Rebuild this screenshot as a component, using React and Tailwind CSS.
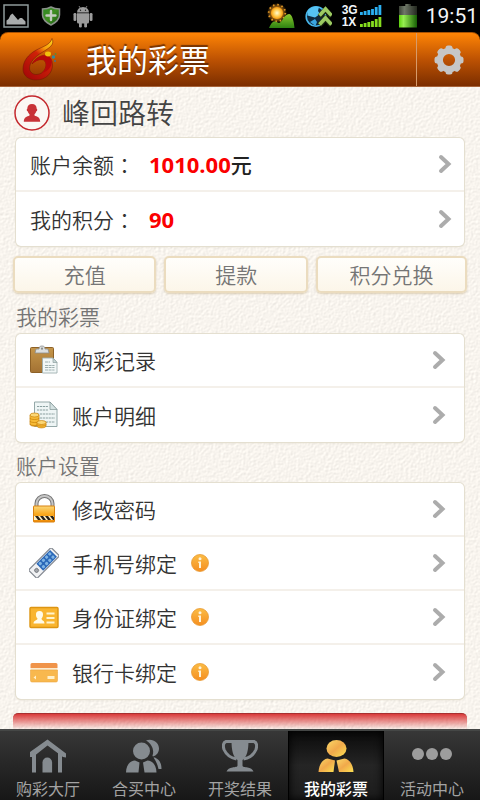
const FONT = "font-['Noto_Sans_CJK_SC',sans-serif] font-[350]";

function PictureIcon() {
  return (
    <svg width="26" height="24" viewBox="0 0 26 24">
      <rect x="1" y="1" width="24" height="22" fill="#000" stroke="#8f9a9b" strokeWidth="1.500" />
      <path d="M3.500 20.500v-4l2-1.500 2-4 2-1.500 3 3.500 2.500 3 2-2 2 0 3.500 3.500v3z" fill="#a9acac" />
    </svg>
  );
}

function ShieldIcon() {
  return (
    <svg width="20" height="20" viewBox="0 0 20 20">
      <defs>
        <linearGradient id="shield" x1="0" y1="0" x2="1" y2="1">
          <stop offset="0" stopColor="#2f8a26" />
          <stop offset="0.5" stopColor="#3f8d20" />
          <stop offset="1" stopColor="#14560d" />
        </linearGradient>
      </defs>
      <path d="M1.500 3q5 0 8.500-2 3.500 2 8.500 2v6c0 5-4 7.500-8.500 10C5.500 16.500 1.500 14 1.500 9z" fill="url(#shield)" stroke="#8b918b" strokeWidth="1.500" />
      <path d="M10 5v9M5.500 9.500h9" stroke="#c3ccbf" strokeWidth="2.400" strokeLinecap="round" />
    </svg>
  );
}

function AndroidIcon() {
  return (
    <svg width="20" height="23" viewBox="0 0 20 23" fill="#9c9c9c">
      <path d="M4 7.500a6 5.500 0 0 1 12 0z" />
      <path d="M6 1l1.500 2.500M14 1l-1.500 2.500" stroke="#9c9c9c" strokeWidth="0.800" />
      <path d="M4 8.300h12V17a1.500 1.500 0 0 1-1.500 1.500h-9A1.500 1.500 0 0 1 4 17z" />
      <rect x="0.500" y="8" width="2.900" height="8" rx="1.300" />
      <rect x="16.600" y="8" width="2.900" height="8" rx="1.300" />
      <rect x="6" y="16" width="2.800" height="6.500" rx="1.300" />
      <rect x="11.200" y="16" width="2.800" height="6.500" rx="1.300" />
      <circle cx="7.500" cy="5.200" r="0.700" fill="#222" />
      <circle cx="12.500" cy="5.200" r="0.700" fill="#222" />
    </svg>
  );
}

function WeatherIcon() {
  return (
    <svg width="28" height="26" viewBox="0 0 28 26">
      <defs>
        <radialGradient id="sun">
          <stop offset="0" stopColor="#fffbd0" />
          <stop offset="0.600" stopColor="#ffc94a" />
          <stop offset="1" stopColor="#f39a12" />
        </radialGradient>
        <radialGradient id="glow">
          <stop offset="0.400" stopColor="#e8921a" />
          <stop offset="1" stopColor="#e8921a" stopOpacity="0" />
        </radialGradient>
        <linearGradient id="hill" x1="0" y1="0" x2="0" y2="1">
          <stop offset="0" stopColor="#8cc92d" />
          <stop offset="1" stopColor="#2e8212" />
        </linearGradient>
      </defs>
      <circle cx="10" cy="10" r="10" fill="url(#glow)" />
      <circle cx="10" cy="10" r="8.300" fill="none" stroke="#e59a28" strokeWidth="1.800" strokeDasharray="1.500 2.850" />
      <circle cx="10" cy="10" r="6" fill="url(#sun)" />
      <path d="M2 25c2-4 3-6.500 6-6.500 2 0 2.500 1.500 4 1.500C15 20 17 11 22 11c3 0 5 7 5.500 14z" fill="url(#hill)" />
    </svg>
  );
}

function GlobeIcon() {
  return (
    <svg width="27" height="23" viewBox="0 0 27 23">
      <circle cx="11" cy="11.500" r="9.800" fill="#10283c" stroke="#47b7ec" strokeWidth="1.600" />
      <path d="M3 5.500Q8 0 14 2l-1 4 2 3-5 3.500-4-1-3.500-1z" fill="#56c3f3" />
      <path d="M5 17l5-3 2 3-1.500 4z" fill="#3aa5e0" />
      <path d="M14.500 11.500L20.500 5l6 6.500M14.500 20l6-6.500 6 6.500" fill="none" stroke="#1c2b10" strokeWidth="5" />
      <path d="M14.500 10.500L20.500 4l6 6.500M14.500 19.500l6-6.500 6 6.500" fill="none" stroke="#9ccb62" strokeWidth="3.600" />
    </svg>
  );
}

function SignalIcon() {
  const bars = [3, 4, 5, 6, 8, 10];
  return (
    <svg width="22" height="22" viewBox="0 0 22 22">
      {bars.map((h, i) => (
        <g key={i}>
          <rect x={i * 3.700} y={10 - h} width="2.800" height={h} fill="#2bb0f2" />
          <rect x={i * 3.700} y={22 - h} width="2.800" height={h} fill="#86dc1f" />
        </g>
      ))}
    </svg>
  );
}

function BatteryIcon() {
  return (
    <svg width="20" height="24" viewBox="0 0 20 24">
      <defs>
        <linearGradient id="batt" x1="0" y1="0" x2="1" y2="0">
          <stop offset="0" stopColor="#5fd00e" />
          <stop offset="0.250" stopColor="#95ee50" />
          <stop offset="1" stopColor="#175f05" />
        </linearGradient>
        <linearGradient id="battTop" x1="0" y1="0" x2="1" y2="0">
          <stop offset="0" stopColor="#3c4236" />
          <stop offset="0.300" stopColor="#6f7868" />
          <stop offset="1" stopColor="#23281f" />
        </linearGradient>
      </defs>
      <rect x="7" y="0" width="6" height="3" fill="url(#battTop)" />
      <rect x="1" y="2" width="18" height="10" fill="url(#battTop)" />
      <rect x="1" y="11" width="18" height="12.500" fill="url(#batt)" />
    </svg>
  );
}

function StatusBar() {
  return (
    <div className="flex h-8 items-center justify-between bg-black pr-0.5 pl-[3px]">
      <div className="flex items-center gap-3">
        <PictureIcon />
        <ShieldIcon />
        <AndroidIcon />
      </div>
      <div className="flex items-center">
        <WeatherIcon />
        <span className="ml-2.5"><GlobeIcon /></span>
        <div className="ml-2.5 flex flex-col font-['Liberation_Sans',sans-serif] text-[12px] leading-3 font-bold text-slate-100">
          <span>3G</span>
          <span>1X</span>
        </div>
        <span className="ml-0.5"><SignalIcon /></span>
        <span className="ml-4"><BatteryIcon /></span>
        <span className="ml-2 font-[Roboto,sans-serif] text-[21px] leading-none font-normal text-gray-100">19:51</span>
      </div>
    </div>
  );
}

function Logo() {
  return (
    <svg width="36" height="44" viewBox="0 0 36 44">
      <defs>
        <linearGradient id="flame" x1="0.900" y1="0" x2="0.300" y2="1">
          <stop offset="0" stopColor="#ffd21c" />
          <stop offset="0.250" stopColor="#f79a0a" />
          <stop offset="0.450" stopColor="#cf2208" />
          <stop offset="1" stopColor="#a80a08" />
        </linearGradient>
      </defs>
      <path d="M30 .5C28 8 18 9 11 14 4 19 1 25 1 31c0 7 6 11 13 11 10 0 17-7 16.500-16-.3-4-2.500-7-5.500-9-6 0-12 3-15 9 4-4 8-5 11.500-4 4 2 3 10-2 13-5 3-11 1.500-12-4C7 24 14 18 20 14.500 27 10 33 7 30 .5z" fill="url(#flame)" stroke="#6d1604" strokeWidth="0.500" />
      <path d="M25 17c-6 0-12 3-15 9 4-4 8-5 11.500-4 4 2 3 10-2 13 5-1 10-5 10.500-11 0-3-2-5-5-7z" fill="#b8090a" />
      <ellipse cx="26" cy="16" rx="3" ry="2.400" fill="#f2c10c" />
      <circle cx="31.500" cy="19" r="1.700" fill="#2f8ba0" />
      <circle cx="33.500" cy="16" r="0.900" fill="#5a8a3a" />
      <circle cx="33" cy="23" r="0.900" fill="#39779b" />
    </svg>
  );
}

function GearIcon() {
  return (
    <svg width="30" height="30" viewBox="0 0 30 30">
      <g fill="#c6c6c6">
        {[0, 45, 90, 135, 180, 225, 270, 315].map((a) => (
          <rect key={a} x="11.500" y="0.500" width="7" height="7" rx="2.500" transform={`rotate(${a} 15 15)`} />
        ))}
      </g>
      <circle cx="15" cy="15" r="9.200" fill="none" stroke="#c6c6c6" strokeWidth="6.200" />
    </svg>
  );
}

function Header() {
  return (
    <div className="bg-black">
      <header className="flex h-[55px] items-stretch rounded-t-lg border-t border-b border-t-[#a85204] border-b-[#a8643a] bg-linear-to-b from-[#ff8505] via-[#bd5203] to-[#7c2e00]">
        <div className="flex flex-1 items-center pl-[22px]">
          <Logo />
          <h1 className="ml-7 pb-0.5 text-[31px] leading-none font-normal text-white [text-shadow:0_-2px_1px_rgba(70,25,0,0.7)]">我的彩票</h1>
        </div>
        <button type="button" aria-label="设置" className="flex w-16 items-center justify-center border-l border-[#d69a6a]">
          <GearIcon />
        </button>
      </header>
    </div>
  );
}

function AvatarIcon() {
  return (
    <svg width="36" height="36" viewBox="0 0 36 36">
      <circle cx="18" cy="18" r="17" fill="#fbf7f3" stroke="#c4282d" strokeWidth="1.500" />
      <path d="M18 9c3 0 4.700 2 4.700 4.700 1 .6.500 2.300-.4 2.600-.3 1.500-1.200 2.400-1.800 3v1.200c2.500 1.200 5.700 1.700 5.700 6.200H9.800c0-4.500 3.200-5 5.700-6.200v-1.200c-.6-.6-1.500-1.500-1.800-3-.9-.3-1.400-2-.4-2.600C13.300 11 15 9 18 9z" fill="#c83237" />
    </svg>
  );
}

function Chevron() {
  return (
    <svg width="14" height="20" viewBox="0 0 14 20" className="shrink-0">
      <path d="M3 3l7.500 7L3 17" fill="none" stroke="#acacac" strokeWidth="4" strokeLinecap="round" strokeLinejoin="miter" />
    </svg>
  );
}

function ClipboardIcon() {
  return (
    <svg width="30" height="30" viewBox="0 0 30 30">
      <defs>
        <linearGradient id="board" x1="0" y1="0" x2="0" y2="1">
          <stop offset="0" stopColor="#c5964a" />
          <stop offset="1" stopColor="#a37233" />
        </linearGradient>
      </defs>
      <rect x="1.500" y="2.500" width="23" height="25" rx="1" fill="url(#board)" stroke="#8d6127" />
      <path d="M7 4h3c0-2 1-3 3-3s3 1 3 3h3l1 4H6z" fill="#dcdfdf" stroke="#8a8d8d" strokeWidth="0.800" />
      <circle cx="13" cy="3.700" r="1.100" fill="#8a8d8d" />
      <path d="M13.500 13h10.500l4 4.500v10.500h-14.500z" fill="#f2f7f7" stroke="#9fb0b0" strokeWidth="0.900" />
      <path d="M24 13v4.500h4z" fill="#c9d8d8" stroke="#7f9393" strokeWidth="0.600" />
      <path d="M16 17h5M16 20.500h9.500M16 22.500h9.500M16 25h9.500" stroke="#93a6a6" strokeWidth="0.900" strokeDasharray="3 0.600" />
    </svg>
  );
}

function StatementIcon() {
  return (
    <svg width="30" height="30" viewBox="0 0 30 30">
      <path d="M5.500 2H21l7 7.500V26.500H5.500z" fill="#eef5f5" stroke="#94a8a8" />
      <path d="M21 2v7.500h7z" fill="#d5e2e2" stroke="#7f9393" strokeWidth="0.700" />
      <path d="M8 6.500h11M8 10h11M8 14h18M8 18h18M14 22h12" stroke="#8aa0a0" strokeWidth="1.100" strokeDasharray="2.200 0.700" />
      <g stroke="#c9810a" strokeWidth="0.700" fill="#f6ba35">
        <path d="M1 15v9c0 3 9 3 9 0v-9z" />
        <path d="M1 18c0 2 9 2 9 0M1 21c0 2 9 2 9 0M1 24c0 2 9 2 9 0" fill="none" />
        <ellipse cx="5.500" cy="15" rx="4.500" ry="2" fill="#fbd776" />
        <path d="M8 22v4c0 2.500 9 2.500 9 0v-4z" />
        <path d="M8 24.500c0 2 9 2 9 0" fill="none" />
        <ellipse cx="12.500" cy="22.500" rx="4.500" ry="2" fill="#fbd776" />
      </g>
    </svg>
  );
}

function LockIcon() {
  return (
    <svg width="30" height="30" viewBox="0 0 30 30">
      <defs>
        <linearGradient id="lock" x1="0" y1="0" x2="0" y2="1">
          <stop offset="0" stopColor="#fbd87a" />
          <stop offset="0.500" stopColor="#f9a91f" />
          <stop offset="1" stopColor="#f08c08" />
        </linearGradient>
      </defs>
      <path d="M7.500 13v-3.500a8 7.500 0 0 1 16 0V13" fill="none" stroke="#757575" strokeWidth="4" />
      <path d="M7.500 13v-3.500a8 7.500 0 0 1 16 0V13" fill="none" stroke="#c6c6c6" strokeWidth="2" />
      <rect x="4.500" y="12" width="21" height="16" rx="0.500" fill="url(#lock)" stroke="#d9810e" />
      <rect x="5" y="22" width="20" height="4" fill="#fff0c4" />
      <path d="M6 22h3l3 4H9zM11 22h3l3 4h-3zM16 22h3l3 4h-3zM21 22h3l1 1.500V26h-1z" fill="#252019" />
    </svg>
  );
}

function PhoneIcon() {
  return (
    <svg width="30" height="30" viewBox="0 0 30 30">
      <g transform="rotate(45 15 15)">
        <rect x="9" y="-1" width="12" height="32" rx="1.200" fill="#f1f2f4" stroke="#858a92" strokeWidth="1.200" />
        <rect x="10.200" y="1.500" width="9.600" height="19.500" fill="#2a68b8" />
        <g fill="#7fb4e4">
          {[3, 7.500, 12, 16.500].map((y) => (
            <g key={y}>
              <rect x="11.200" y={y} width="3" height="3" rx="1" />
              <rect x="15.700" y={y} width="3" height="3" rx="1" />
            </g>
          ))}
        </g>
        <circle cx="15" cy="25.500" r="2" fill="#a2a5aa" stroke="#696d73" strokeWidth="0.800" />
      </g>
    </svg>
  );
}

function IdCardIcon() {
  return (
    <svg width="30" height="30" viewBox="0 0 30 30">
      <rect x="1" y="5.500" width="28" height="20" rx="1" fill="#f9b530" stroke="#dd9512" strokeWidth="1.400" />
      <path d="M10.500 9c2.500 0 3.700 1.600 3.500 4-.1 1.800-1 3-1.500 3.500 0 2.500 3 1.500 3 5h-11c0-3.500 4-3 4-5C7.500 15.500 7 14.500 7 13c-.2-2.400 1-4 3.500-4z" fill="#fffbea" />
      <path d="M17.500 11.500h8M17.500 16h8M17.500 20.500h8" stroke="#fff4cf" strokeWidth="2" />
    </svg>
  );
}

function BankCardIcon() {
  return (
    <svg width="30" height="30" viewBox="0 0 30 30">
      <path d="M3 6h24a1.500 1.500 0 0 1 1.500 1.500V11h-27V7.500A1.500 1.500 0 0 1 3 6z" fill="#f0944a" />
      <path d="M1.500 11h27v2.500h-27z" fill="#fcebce" />
      <path d="M1.500 13h27v10.500a1.500 1.500 0 0 1-1.500 1.500H3a1.500 1.500 0 0 1-1.500-1.500z" fill="#f8b84e" stroke="#eda63f" strokeWidth="0.600" />
      <rect x="18.500" y="19" width="7" height="3" fill="#fff0c9" />
      <path d="M7 18.500v4l-2.500-2z" fill="#fff0c9" />
    </svg>
  );
}

function InfoIcon() {
  return (
    <svg width="18" height="18" viewBox="0 0 18 18" className="ml-3.5">
      <defs>
        <linearGradient id="info" x1="0" y1="0" x2="0" y2="1">
          <stop offset="0" stopColor="#fbbd45" />
          <stop offset="1" stopColor="#f58e20" />
        </linearGradient>
      </defs>
      <circle cx="9" cy="9" r="8.500" fill="url(#info)" stroke="#e99a33" strokeWidth="0.800" />
      <circle cx="9" cy="4.800" r="1.500" fill="#fff3da" />
      <path d="M7.300 7.500h2.700v6.500H8V9h-.7z" fill="#fff3da" />
    </svg>
  );
}

function Card({ children }) {
  return (
    <ul className="mx-4 divide-y-2 divide-[#f4f0ea] rounded-[5px] bg-white shadow-[0_1px_2px_rgba(200,190,170,0.5)] ring-1 ring-[#e4dfd0]">
      {children}
    </ul>
  );
}

function BalanceRow({ label, value, unit }) {
  return (
    <li className="h-[54px]">
      <a href="#" className="flex h-full items-center pr-3 pl-3.5 text-[21px] leading-none text-[#333]">
        <span>{label}</span>
        <span className="font-['Noto_Sans_CJK_TC',sans-serif]">：</span>
        <span className="ml-3.5 flex-1 font-['Open_Sans','Noto_Sans_CJK_SC',sans-serif] text-[22px] font-bold text-[#fb0000]">
          {value}
          {unit && <span className="text-[21px] font-medium text-[#222]">{unit}</span>}
        </span>
        <Chevron />
      </a>
    </li>
  );
}

function MenuRow({ icon, label, info }) {
  return (
    <li className="h-[54px]">
      <a href="#" className="flex h-full items-center pr-[18px] pl-[13px] text-[21px] leading-none text-[#333]">
        {icon}
        <span className="ml-[13px]">{label}</span>
        {info && <InfoIcon />}
        <span className="ml-auto"><Chevron /></span>
      </a>
    </li>
  );
}

function ActionButton({ children }) {
  return (
    <button
      type="button"
      className="h-[37px] rounded-[5px] border-2 border-[#ebdcbf] bg-linear-to-b from-[#fffefb] to-[#fcf6e9] text-[21px] leading-none text-[#757575] shadow-[0_1px_2px_rgba(190,170,130,0.5)]"
    >
      {children}
    </button>
  );
}

function SectionTitle({ children }) {
  return <h2 className="flex h-[41px] items-center px-4 pt-1.5 text-[21px] leading-none text-[#757575]">{children}</h2>;
}

function PaperGrain() {
  return (
    <svg className="absolute inset-0 -z-10 h-full w-full" aria-hidden="true">
      <filter id="grain" x="0" y="0" width="100%" height="100%" colorInterpolationFilters="sRGB">
        <feTurbulence type="fractalNoise" baseFrequency="0.400" numOctaves="2" seed="4" />
        <feDiffuseLighting lightingColor="#f8f4ee" surfaceScale="0.120" diffuseConstant="1.390">
          <feDistantLight azimuth="225" elevation="46" />
        </feDiffuseLighting>
      </filter>
      <rect width="100%" height="100%" filter="url(#grain)" />
    </svg>
  );
}

function HomeIcon() {
  return (
    <svg width="36" height="34" viewBox="0 0 36 34" fill="#858b90">
      <path d="M0 13L17.500.5 36 14.500v4l-3-.5L17.500 6.500 3 18H0z" />
      <path d="M2 15l4-3v21.500H2zM28 11l4 3v19.500h-4z" />
      <path d="M12.500 33.500V23.500a4.800 5 0 0 1 9.600 0v10z" />
    </svg>
  );
}

function GroupIcon() {
  return (
    <svg width="36" height="34" viewBox="0 0 36 34" fill="#858b90">
      <circle cx="15.500" cy="12" r="8.500" />
      <path d="M0 33.500c0-7 4-12 9-12l4.500 2-1 10zM30.500 33.500c0-7-4-12-9-12l-4.500 2 1.500 10z" />
      <path d="M20 1.500c6-2.500 13 1.500 13 8 0 4-2.500 7-6 8-.5-.5-.5-1-.5-1 2-5-.5-12-6.500-15z" />
      <path d="M27.500 18.500h1.500c4 2 6.500 5 6.500 11.500h-3c-1-4.500-2.500-8-5-11.500z" />
    </svg>
  );
}

function TrophyIcon() {
  return (
    <svg width="36" height="34" viewBox="0 0 36 34" fill="#858b90">
      <path d="M9.500 1h17c0 10-1.500 17-6 20v5.500c0 1.500 2.500 1.500 5 2 3 .5 5 1.500 6 4h-27c1-2.500 3-3.500 6-4 2.500-.5 5-.5 5-2V21c-4.500-3-6-10-6-20z" />
      <path d="M11 2.500H4C1 3.500 1 7 2 10.500 4 15 9 19 14.500 20M25 2.500h7c3 1 3 4.500 2 8-2 4.500-7 8.500-12.500 9.500" fill="none" stroke="#858b90" strokeWidth="3" />
    </svg>
  );
}

function UserIcon() {
  return (
    <svg width="36" height="34" viewBox="0 0 36 34">
      <defs>
        <linearGradient id="gold" x1="0" y1="0" x2="1" y2="1">
          <stop offset="0" stopColor="#fad968" />
          <stop offset="0.500" stopColor="#f1a94b" />
          <stop offset="1" stopColor="#fbe052" />
        </linearGradient>
      </defs>
      <g fill="url(#gold)">
        <ellipse cx="18.500" cy="9.500" rx="10" ry="8.500" />
        <path d="M.5 33C1 25 5 20 9.500 19.500L17 21.500 15.500 33z" />
        <path d="M35.500 33C35 25 31 20 26.500 19.500L18.500 21.500 21 33z" />
      </g>
    </svg>
  );
}

function DotsIcon() {
  return (
    <svg width="40" height="34" viewBox="0 0 40 34" fill="#9d9d9d">
      <circle cx="6" cy="15" r="6" />
      <circle cx="20" cy="15" r="6" />
      <circle cx="34" cy="15" r="6" />
    </svg>
  );
}

const tabs = [
  { label: '购彩大厅', icon: <HomeIcon /> },
  { label: '合买中心', icon: <GroupIcon /> },
  { label: '开奖结果', icon: <TrophyIcon /> },
  { label: '我的彩票', icon: <UserIcon />, active: true },
  { label: '活动中心', icon: <DotsIcon /> },
];

function TabBar() {
  return (
    <nav className="grid h-[71px] grid-cols-5 border-t-2 border-[#454746] bg-linear-to-b from-[#373737] to-[#171717]">
      {tabs.map((tab) => (
        <a
          key={tab.label}
          href="#"
          className={
            tab.active
              ? 'flex flex-col items-center gap-1 border-x border-black bg-linear-to-b from-[#0b0b0b] via-[#252525] to-[#1c1c1c] pt-2 text-[16px] leading-[22px] font-medium text-white shadow-[inset_0_0_8px_#000]'
              : 'flex flex-col items-center gap-1 pt-2 text-[16px] leading-[22px] font-normal text-[#a3a3a3]'
          }
        >
          {tab.icon}
          <span>{tab.label}</span>
        </a>
      ))}
    </nav>
  );
}

export default function App() {
  return (
    <div className={`${FONT} flex min-h-screen flex-col bg-[#f7f4ee]`}>
      <StatusBar />
      <Header />
      <main className="relative isolate flex flex-1 flex-col">
        <PaperGrain />
        <div className="flex h-[51px] items-center gap-3 px-3.5">
          <AvatarIcon />
          <span className="pb-0.5 text-[28px] leading-none text-[#444]">峰回路转</span>
        </div>
        <Card>
          <BalanceRow label="账户余额" value="1010.00" unit="元" />
          <BalanceRow label="我的积分" value="90" />
        </Card>
        <div className="mx-[13px] mt-2.5 grid grid-cols-[19fr_19fr_20fr] gap-2">
          <ActionButton>充值</ActionButton>
          <ActionButton>提款</ActionButton>
          <ActionButton>积分兑换</ActionButton>
        </div>
        <SectionTitle>我的彩票</SectionTitle>
        <Card>
          <MenuRow icon={<ClipboardIcon />} label="购彩记录" />
          <MenuRow icon={<StatementIcon />} label="账户明细" />
        </Card>
        <SectionTitle>账户设置</SectionTitle>
        <Card>
          <MenuRow icon={<LockIcon />} label="修改密码" />
          <MenuRow icon={<PhoneIcon />} label="手机号绑定" info />
          <MenuRow icon={<IdCardIcon />} label="身份证绑定" info />
          <MenuRow icon={<BankCardIcon />} label="银行卡绑定" info />
        </Card>
        <div className="mx-[13px] mt-auto h-4 rounded-t-[5px] border-t border-[#a83030] bg-linear-to-b from-[#d93a3a] to-[#d93a3a]/5" />
      </main>
      <TabBar />
    </div>
  );
}
